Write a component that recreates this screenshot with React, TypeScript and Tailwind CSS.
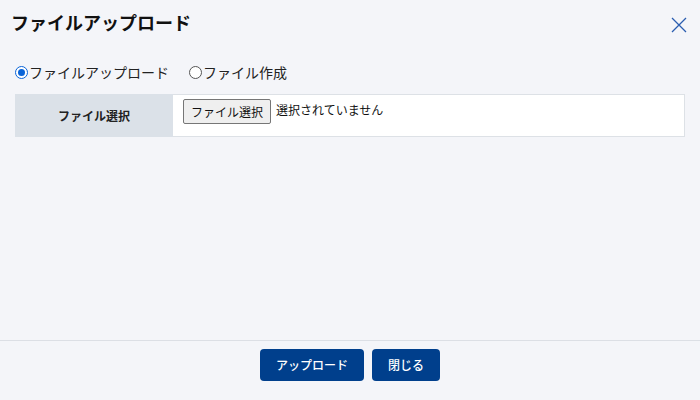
const font = { fontFamily: '"Noto Sans CJK JP", "Noto Sans", sans-serif' };

function Radio({ checked, label }: { checked?: boolean; label: string }) {
  return (
    <label className="flex items-center text-[14px] text-[#222] leading-none">
      <span
        className={
          "w-[13px] h-[13px] rounded-full border flex items-center justify-center mr-px " +
          (checked ? "border-[#0a64d8] bg-white" : "border-[#555] bg-white")
        }
      >
        {checked && <span className="w-[7px] h-[7px] rounded-full bg-[#0a64d8]" />}
      </span>
      {label}
    </label>
  );
}

export default function App() {
  const footBtn =
    "h-[32px] rounded-[4px] bg-[#003f8c] text-white text-[12px] font-medium flex items-center justify-center";

  return (
    <div className="w-[700px] h-[400px] bg-[#f4f5f9] flex flex-col" style={font}>
      <div className="h-[44px] pl-[11px] pr-[13px] flex items-center justify-between">
        <div className="text-[18px] font-bold text-[#111] leading-none">ファイルアップロード</div>
        <svg width="16" height="16" viewBox="0 0 16 16" className="mt-[5px]">
          <path d="M1 1 L15 15 M15 1 L1 15" stroke="#2a5db0" strokeWidth="1.3" fill="none" />
        </svg>
      </div>

      <div className="flex-1 px-[15px] pt-[21px]">
        <div className="flex items-center gap-[20px] h-[14px]">
          <Radio checked label="ファイルアップロード" />
          <Radio label="ファイル作成" />
        </div>

        <div className="mt-[15px] flex h-[43px]">
          <div className="w-[158px] bg-[#dbe1e8] flex items-center justify-center text-[12px] font-bold text-[#222]">
            ファイル選択
          </div>
          <div className="flex-1 bg-white border border-l-0 border-[#dde1e6] flex items-start pt-[4px] pl-[10px]">
            <button className="h-[25px] px-[7px] border border-[#767676] rounded-[2px] bg-[#efefef] text-[12px] text-[#111]">
              ファイル選択
            </button>
            <span className="ml-[5px] mt-[5px] text-[12px] text-[#111] leading-none">選択されていません</span>
          </div>
        </div>
      </div>

      <div className="h-[60px] border-t border-[#dcdfe5] flex justify-center gap-[8px] pt-[8px]">
        <button className={footBtn + " w-[104px]"}>アップロード</button>
        <button className={footBtn + " w-[68px]"}>閉じる</button>
      </div>
    </div>
  );
}
